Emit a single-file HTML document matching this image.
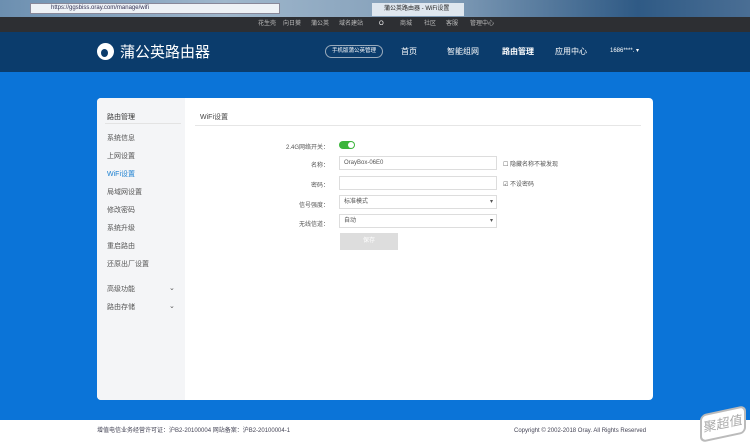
<!DOCTYPE html>
<html style="background:#fff"><head><meta charset="utf-8"><style>
*{margin:0;padding:0;box-sizing:border-box}
body{width:750px;height:443px;overflow:hidden;font-family:"Liberation Sans","Noto Sans CJK SC",sans-serif;background:#0b74d8;position:relative;font-size:7px;color:#555}
.br{position:absolute;left:0;top:0;width:750px;height:17px;background:linear-gradient(90deg,#6c8fb0,#9fb7cc 30%,#7f9bb6 60%,#2f5a85 85%,#4a6e94)}
.url{position:absolute;left:30px;top:3px;width:250px;height:11px;background:#eef2f6;border:1px solid #889;font-size:6px;color:#335;padding-left:20px;line-height:9px}
.tab{position:absolute;left:372px;top:3px;width:92px;height:13px;background:#dfe7ef;font-size:6px;line-height:12px;padding-left:12px;color:#222}
.top{position:absolute;left:0;top:17px;width:750px;height:15px;background:#2d2f33;color:#bbb;font-size:6px;line-height:15px}
.top span{position:absolute}
.hd{position:absolute;left:0;top:32px;width:750px;height:40px;background:#0b3c6c;color:#fff}
.card{position:absolute;left:97px;top:98px;width:556px;height:302px;background:#fff;border-radius:4px}
.side{position:absolute;left:0;top:0;width:88px;height:302px;background:#f4f5f7;border-radius:4px 0 0 4px}
.side div{position:absolute;left:10px;font-size:7px;color:#555}
.ft{position:absolute;left:0;top:420px;width:750px;height:23px;background:#fff;font-size:6px;color:#445;line-height:23px}
.lbl{position:absolute;font-size:6px;color:#555;text-align:right;width:80px}
.inp{position:absolute;left:242px;width:158px;height:14px;border:1px solid #ddd;font-size:6px;line-height:12px;padding-left:4px;color:#555}
</style></head><body>
<div class="br"><div class="url">https://ggsbiss.oray.com/manage/wifi</div><div class="tab">蒲公英路由器 - WiFi设置</div></div>
<div class="top"><span style="left:258px">花生壳</span><span style="left:283px">向日葵</span><span style="left:311px">蒲公英</span><span style="left:339px">域名建站</span><span style="left:379px;color:#fff">O</span><span style="left:400px">商城</span><span style="left:424px">社区</span><span style="left:446px">客服</span><span style="left:470px">管理中心</span></div>
<div class="hd">
<div style="position:absolute;left:97px;top:11px;width:17px;height:17px;border-radius:50%;background:#fff"></div>
<div style="position:absolute;left:101px;top:17px;width:7px;height:8px;border-radius:50%;background:#0b3c6c"></div>
<div style="position:absolute;left:120px;top:9px;font-size:15px">蒲公英路由器</div>
<div style="position:absolute;left:325px;top:13px;width:58px;height:13px;border:1px solid #9ab;border-radius:7px;font-size:5.5px;line-height:11px;text-align:center">手机版蒲公英管理</div>
<div style="position:absolute;left:401px;top:14px;font-size:8px">首页</div>
<div style="position:absolute;left:447px;top:14px;font-size:8px">智能组网</div>
<div style="position:absolute;left:502px;top:14px;font-size:8px;font-weight:bold">路由管理</div>
<div style="position:absolute;left:555px;top:14px;font-size:8px">应用中心</div>
<div style="position:absolute;left:610px;top:15px;font-size:6px">1686****. ▾</div>
</div>
<div class="card">
<div class="side">
<div style="top:14px;color:#333">路由管理</div>
<div style="top:25px;left:8px;width:76px;height:1px;background:#e3e3e3"></div>
<div style="top:35px">系统信息</div><div style="top:53px">上网设置</div><div style="top:71px;color:#1a7fd0">WiFi设置</div><div style="top:89px">局域网设置</div><div style="top:107px">修改密码</div><div style="top:125px">系统升级</div><div style="top:143px">重启路由</div><div style="top:161px">还原出厂设置</div><div style="top:186px">高级功能</div><div style="top:186px;left:72px">⌄</div><div style="top:204px">路由存储</div><div style="top:204px;left:72px">⌄</div>
</div>
<div style="position:absolute;left:103px;top:14px;font-size:7px;color:#444">WiFi设置</div>
<div style="position:absolute;left:98px;top:27px;width:446px;height:1px;background:#e6e6e6"></div>
<div class="lbl" style="left:152px;top:44px">2.4G网络开关：</div>
<div style="position:absolute;left:242px;top:43px;width:16px;height:8px;border-radius:4px;background:#3bb53b"><div style="position:absolute;right:1px;top:1px;width:6px;height:6px;border-radius:50%;background:#fff"></div></div>
<div class="lbl" style="left:152px;top:62px">名称：</div><div class="inp" style="top:58px">OrayBox-06E0</div>
<div style="position:absolute;left:406px;top:61px;font-size:6px">☐ 隐藏名称不被发现</div>
<div class="lbl" style="left:152px;top:82px">密码：</div><div class="inp" style="top:78px"></div>
<div style="position:absolute;left:406px;top:81px;font-size:6px">☑ 不设密码</div>
<div class="lbl" style="left:152px;top:102px">信号强度：</div><div class="inp" style="top:97px">标准模式<span style="position:absolute;right:3px">▾</span></div>
<div class="lbl" style="left:152px;top:121px">无线信道：</div><div class="inp" style="top:116px">自动<span style="position:absolute;right:3px">▾</span></div>
<div style="position:absolute;left:243px;top:135px;width:58px;height:17px;background:#ddd;color:#fff;font-size:6px;text-align:center;line-height:17px">保存</div>
</div>
<div class="ft"><span style="position:absolute;left:97px">增值电信业务经营许可证：沪B2-20100004 网站备案：沪B2-20100004-1</span><span style="position:absolute;left:514px">Copyright © 2002-2018 Oray. All Rights Reserved</span>
<div style="position:absolute;left:700px;top:-10px;width:46px;height:28px;border:2px solid #bbb;border-radius:6px;transform:skewY(-12deg);color:#aaa;font-size:13px;line-height:24px;text-align:center;background:#fff">聚超值</div></div>
</body></html>
